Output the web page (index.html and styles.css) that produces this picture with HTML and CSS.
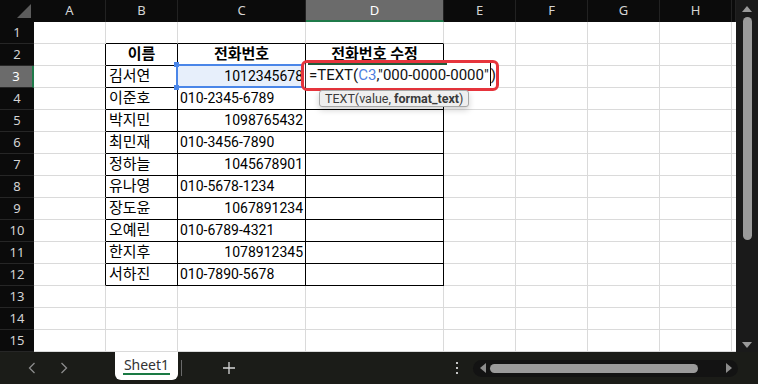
FILE: index.html
```html
<!doctype html>
<html lang="ko">
  <head>
    <meta charset="UTF-8" />
    <meta name="viewport" content="width=device-width, initial-scale=1.0" />
    <title>Sheet1</title>
    <link rel="stylesheet" href="styles.css">
  </head>
  <body>
    <div class="App">
      <div class="Sheet">
        <div class="Row Row--head">
          <div class="Corner">
            <svg width="34" height="22" viewBox="0 0 34 22"><polygon points="17,18 31,18 31,4" fill="#5c5c5c" /></svg>
          </div>
          <div class="ColHead">A</div>
          <div class="ColHead">B</div>
          <div class="ColHead">C</div>
          <div class="ColHead ColHead--active">D</div>
          <div class="ColHead">E</div>
          <div class="ColHead">F</div>
          <div class="ColHead">G</div>
          <div class="ColHead">H</div>
          <div class="ColHead"></div>
        </div>

        <div class="Row">
          <div class="RowHead">1</div>
          <div class="Cell"></div>
          <div class="Cell tt"></div><div class="Cell tt"></div><div class="Cell tt"></div>
          <div class="Cell"></div><div class="Cell"></div><div class="Cell"></div><div class="Cell"></div><div class="Cell"></div>
        </div>
        <div class="Row">
          <div class="RowHead">2</div>
          <div class="Cell tl"></div>
          <div class="Cell t hd">이름</div><div class="Cell t hd">전화번호</div><div class="Cell t hd">전화번호 수정</div>
          <div class="Cell"></div><div class="Cell"></div><div class="Cell"></div><div class="Cell"></div><div class="Cell"></div>
        </div>
        <div class="Row">
          <div class="RowHead RowHead--active">3</div>
          <div class="Cell tl"></div>
          <div class="Cell t">김서연</div>
          <div class="Cell t num Selected">1012345678<span class="Handle Handle--tl"></span><span class="Handle Handle--bl"></span></div>
          <div class="Cell t"></div>
          <div class="Cell"></div><div class="Cell"></div><div class="Cell"></div><div class="Cell"></div><div class="Cell"></div>
        </div>
        <div class="Row">
          <div class="RowHead">4</div>
          <div class="Cell tl"></div>
          <div class="Cell t">이준호</div><div class="Cell t tel">010-2345-6789</div><div class="Cell t"></div>
          <div class="Cell"></div><div class="Cell"></div><div class="Cell"></div><div class="Cell"></div><div class="Cell"></div>
        </div>
        <div class="Row">
          <div class="RowHead">5</div>
          <div class="Cell tl"></div>
          <div class="Cell t">박지민</div><div class="Cell t num">1098765432</div><div class="Cell t"></div>
          <div class="Cell"></div><div class="Cell"></div><div class="Cell"></div><div class="Cell"></div><div class="Cell"></div>
        </div>
        <div class="Row">
          <div class="RowHead">6</div>
          <div class="Cell tl"></div>
          <div class="Cell t">최민재</div><div class="Cell t tel">010-3456-7890</div><div class="Cell t"></div>
          <div class="Cell"></div><div class="Cell"></div><div class="Cell"></div><div class="Cell"></div><div class="Cell"></div>
        </div>
        <div class="Row">
          <div class="RowHead">7</div>
          <div class="Cell tl"></div>
          <div class="Cell t">정하늘</div><div class="Cell t num">1045678901</div><div class="Cell t"></div>
          <div class="Cell"></div><div class="Cell"></div><div class="Cell"></div><div class="Cell"></div><div class="Cell"></div>
        </div>
        <div class="Row">
          <div class="RowHead">8</div>
          <div class="Cell tl"></div>
          <div class="Cell t">유나영</div><div class="Cell t tel">010-5678-1234</div><div class="Cell t"></div>
          <div class="Cell"></div><div class="Cell"></div><div class="Cell"></div><div class="Cell"></div><div class="Cell"></div>
        </div>
        <div class="Row">
          <div class="RowHead">9</div>
          <div class="Cell tl"></div>
          <div class="Cell t">장도윤</div><div class="Cell t num">1067891234</div><div class="Cell t"></div>
          <div class="Cell"></div><div class="Cell"></div><div class="Cell"></div><div class="Cell"></div><div class="Cell"></div>
        </div>
        <div class="Row">
          <div class="RowHead">10</div>
          <div class="Cell tl"></div>
          <div class="Cell t">오예린</div><div class="Cell t tel">010-6789-4321</div><div class="Cell t"></div>
          <div class="Cell"></div><div class="Cell"></div><div class="Cell"></div><div class="Cell"></div><div class="Cell"></div>
        </div>
        <div class="Row">
          <div class="RowHead">11</div>
          <div class="Cell tl"></div>
          <div class="Cell t">한지후</div><div class="Cell t num">1078912345</div><div class="Cell t"></div>
          <div class="Cell"></div><div class="Cell"></div><div class="Cell"></div><div class="Cell"></div><div class="Cell"></div>
        </div>
        <div class="Row">
          <div class="RowHead">12</div>
          <div class="Cell tl"></div>
          <div class="Cell t">서하진</div><div class="Cell t tel">010-7890-5678</div><div class="Cell t"></div>
          <div class="Cell"></div><div class="Cell"></div><div class="Cell"></div><div class="Cell"></div><div class="Cell"></div>
        </div>
        <div class="Row">
          <div class="RowHead">13</div>
          <div class="Cell"></div><div class="Cell"></div><div class="Cell"></div><div class="Cell"></div>
          <div class="Cell"></div><div class="Cell"></div><div class="Cell"></div><div class="Cell"></div><div class="Cell"></div>
        </div>
        <div class="Row">
          <div class="RowHead">14</div>
          <div class="Cell"></div><div class="Cell"></div><div class="Cell"></div><div class="Cell"></div>
          <div class="Cell"></div><div class="Cell"></div><div class="Cell"></div><div class="Cell"></div><div class="Cell"></div>
        </div>
        <div class="Row">
          <div class="RowHead">15</div>
          <div class="Cell"></div><div class="Cell"></div><div class="Cell"></div><div class="Cell"></div>
          <div class="Cell"></div><div class="Cell"></div><div class="Cell"></div><div class="Cell"></div><div class="Cell"></div>
        </div>

        <!-- cell being edited, with the red call-out -->
        <div class="Editor">
          <div class="Editor-text">=TEXT(<span class="Ref">C3</span>,"000-0000-0000"<span class="Caret"></span>)</div>
        </div>
        <div class="Tip">TEXT(value, <b>format_text</b>)</div>
      </div>

      <div class="VScroll">
        <svg width="10" height="7" viewBox="0 0 10 7"><polygon points="0,7 10,7 5,1" fill="#9a9a9a" /></svg>
        <div class="VScroll-thumb"></div>
        <svg class="VScroll-down" width="10" height="7" viewBox="0 0 10 7"><polygon points="0,0 10,0 5,6" fill="#9a9a9a" /></svg>
      </div>

      <div class="Bar">
        <div class="Bar-nav">
          <svg width="8" height="12" viewBox="0 0 8 12"><polyline points="6.5,1 1.5,6 6.5,11" fill="none" stroke="#8c8c8c" stroke-width="1.3" /></svg>
          <svg width="8" height="12" viewBox="0 0 8 12"><polyline points="1.5,1 6.5,6 1.5,11" fill="none" stroke="#8c8c8c" stroke-width="1.3" /></svg>
        </div>
        <div class="Tab"><span class="Tab-label">Sheet1</span></div>
        <div class="Bar-divider"></div>
        <svg class="Bar-add" width="12" height="12" viewBox="0 0 12 12"><path d="M6 0v12M0 6h12" stroke="#d6d6d6" stroke-width="1.3" /></svg>
        <div class="Bar-spacer"></div>
        <svg class="Bar-more" width="4" height="14" viewBox="0 0 4 14"><rect x="1" y="1" width="2" height="2" fill="#c4c4c4" /><rect x="1" y="6" width="2" height="2" fill="#c4c4c4" /><rect x="1" y="11" width="2" height="2" fill="#c4c4c4" /></svg>
        <div class="HScroll">
          <svg width="7" height="10" viewBox="0 0 7 10"><polygon points="7,0 7,10 1,5" fill="#8c8c8c" /></svg>
          <div class="HScroll-thumb"></div>
          <svg width="7" height="10" viewBox="0 0 7 10"><polygon points="0,0 0,10 6,5" fill="#8c8c8c" /></svg>
        </div>
      </div>
    </div>
  </body>
</html>
```

FILE: styles.css
```css
:root {
  --grid: #dadada;
  --head: #0b0b0b;
  --head-active: #6b6b6b;
  --green: #1f7a4a;
  --blue: #4a86e8;
  --bar: #1b1c18;
}

body {
  margin: 0;
  width: 758px;
  height: 384px;
  overflow: hidden;
  background-color: var(--bar);
  font-family: Roboto, "Noto Sans CJK KR", sans-serif;
}

.App {
  display: grid;
  grid-template-columns: 736px 22px;
  grid-template-rows: 352px 32px;
}

.Sheet {
  position: relative;
  background: #fff;
  overflow: hidden;
}

.Row {
  display: grid;
  grid-template-columns: 34px 72px 72px 128px 138px 72px 72px 72px 72px 4px;
  height: 22px;
}

/* headers */
.Corner,
.ColHead,
.RowHead {
  background: var(--head);
  color: #d4d4d4;
  font-family: "Noto Sans", sans-serif;
  font-size: 13px;
  text-align: center;
  box-sizing: border-box;
}

.Corner svg {
  display: block;
}

.ColHead {
  line-height: 21px;
  border-right: 1px solid #222;
}

.ColHead--active {
  background: var(--head-active);
  color: #fff;
  border-bottom: 2px solid var(--green);
  line-height: 20px;
}

.RowHead {
  line-height: 21px;
  border-bottom: 1px solid #262626;
}

.RowHead--active {
  background: var(--head-active);
  color: #fff;
  border-right: 2px solid var(--green);
}

/* cells */
.Cell {
  box-sizing: border-box;
  border-right: 1px solid var(--grid);
  border-bottom: 1px solid var(--grid);
  padding: 0 3px;
  font-size: 15px;
  line-height: 21px;
  color: #000;
  white-space: nowrap;
}

.Cell.t {
  border-right-color: #000;
  border-bottom-color: #000;
}

.Cell.tl {
  border-right-color: #000;
}

.Cell.tt {
  border-bottom-color: #000;
}

.num,
.tel {
  font-size: 14px;
}

.num {
  text-align: right;
  padding-right: 2px;
}

.tel {
  padding-left: 2px;
}

.hd {
  font-weight: bold;
  text-align: center;
}

.Selected {
  position: relative;
  background: #e7effb;
}

.Selected::before {
  content: "";
  position: absolute;
  top: -2px;
  left: -2px;
  right: -1px;
  bottom: -1px;
  border: 2px solid var(--blue);
}

.Handle {
  position: absolute;
  left: -4px;
  width: 5px;
  height: 5px;
  background: var(--blue);
}

.Handle--tl {
  top: -4px;
}

.Handle--bl {
  bottom: -3px;
}

/* formula being typed, with red call-out */
.Editor {
  position: absolute;
  left: 301px;
  top: 60px;
  width: 198px;
  height: 31px;
  box-sizing: border-box;
  border: 3px solid #e6343c;
  border-radius: 6px;
  background: #fff;
}

.Editor::before {
  content: "";
  position: absolute;
  left: 4px;
  top: 0;
  width: 139px;
  height: 2px;
  background: #215c3a;
}

.Editor-text {
  margin-left: 1px;
  padding-left: 3px;
  border-left: 1px solid #333;
  height: 25px;
  font-size: 15px;
  line-height: 25px;
  color: #111;
  white-space: nowrap;
}

.Ref {
  color: #4f7fe0;
}

.Caret {
  display: inline-block;
  width: 1px;
  height: 23px;
  margin: 0 0 0 1px;
  background: #000;
  vertical-align: top;
}

.Tip {
  position: absolute;
  left: 319px;
  top: 90px;
  height: 17px;
  box-sizing: border-box;
  padding: 0 5px;
  border: 1px solid #a8a8a8;
  border-radius: 3px;
  background: #efefef;
  box-shadow: 0 3px 6px rgba(0, 0, 0, 0.18);
  font-size: 12.5px;
  line-height: 15px;
  color: #3a3a3a;
  white-space: nowrap;
}

/* vertical scrollbar */
.VScroll {
  display: flex;
  flex-direction: column;
  align-items: center;
  padding: 5px 0 3px;
  box-sizing: border-box;
  background: #1a1a1a;
}

.VScroll svg {
  display: block;
}

.VScroll-thumb {
  width: 9px;
  height: 223px;
  margin-top: 5px;
  border-radius: 5px;
  background: #9b9b9b;
}

.VScroll-down {
  margin-top: auto;
}

/* sheet tabs bar */
.Bar {
  grid-column: 1 / 3;
  display: flex;
  align-items: center;
  height: 32px;
}

.Bar svg {
  display: block;
}

.Bar-nav {
  display: flex;
  gap: 24px;
  padding-left: 28px;
  width: 87px;
}

.Tab {
  align-self: flex-start;
  width: 63px;
  height: 28px;
  box-sizing: border-box;
  padding-top: 3px;
  background: #fff;
  border-radius: 0 0 6px 6px;
  text-align: center;
  font-family: "Noto Sans", sans-serif;
  font-size: 14px;
  color: #333;
}

.Tab-label {
  display: inline-block;
  line-height: 17px;
  border-bottom: 2px solid #1a7a44;
  padding: 0 1px;
}

.Bar-divider {
  width: 1px;
  height: 16px;
  margin-left: 3px;
  background: #6a6a6a;
}

.Bar-add {
  margin-left: 41px;
}

.Bar-spacer {
  flex: 1;
}

.Bar-more {
  margin-right: 14px;
}

.HScroll {
  display: flex;
  align-items: center;
  width: 265px;
  height: 17px;
  box-sizing: border-box;
  padding: 0 5px 0 6px;
  margin-right: 20px;
  border-radius: 9px;
  background: #131313;
}

.HScroll-thumb {
  width: 208px;
  height: 9px;
  margin: 0 auto 0 4px;
  border-radius: 5px;
  background: #9b9b9b;
}
```
